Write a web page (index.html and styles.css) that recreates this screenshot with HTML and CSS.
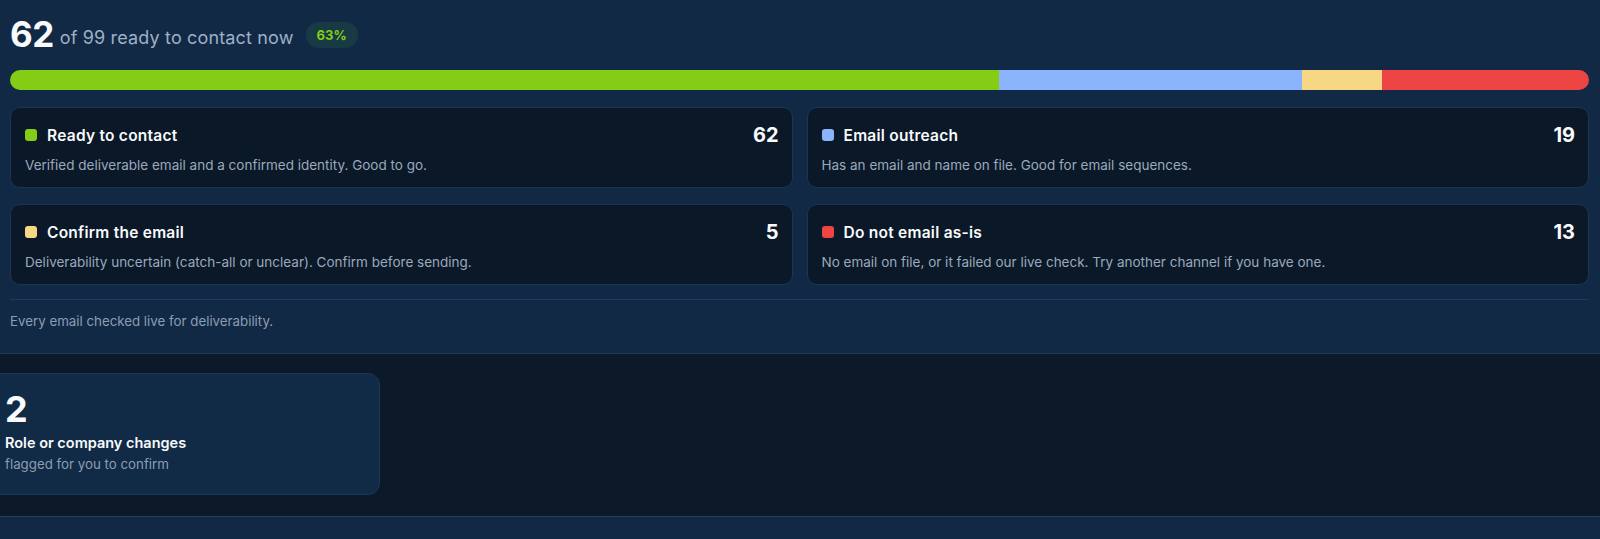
FILE: index.html
```html
<!DOCTYPE html>
<html lang="en">
<head>
    <meta charset="UTF-8">
    <meta name="viewport" content="width=device-width, initial-scale=1.0">
    <title>Contact readiness</title>
    <link rel="stylesheet" href="styles.css">
</head>
<body>
    <section class="summary">
        <div class="headline">
            <span class="headline-count">62</span>
            <span class="headline-text">of 99 ready to contact now</span>
            <span class="badge">63%</span>
        </div>

        <div class="bar">
            <div class="bar-seg seg-ready" style="width: 62.63%"></div>
            <div class="bar-seg seg-email" style="width: 19.19%"></div>
            <div class="bar-seg seg-confirm" style="width: 5.05%"></div>
            <div class="bar-seg seg-skip" style="width: 13.13%"></div>
        </div>

        <div class="bucket-grid">
            <div class="bucket">
                <div class="bucket-head">
                    <span class="dot dot-ready"></span>
                    <span class="bucket-title">Ready to contact</span>
                    <span class="bucket-count">62</span>
                </div>
                <p class="bucket-desc">Verified deliverable email and a confirmed identity. Good to go.</p>
            </div>
            <div class="bucket">
                <div class="bucket-head">
                    <span class="dot dot-email"></span>
                    <span class="bucket-title">Email outreach</span>
                    <span class="bucket-count">19</span>
                </div>
                <p class="bucket-desc">Has an email and name on file. Good for email sequences.</p>
            </div>
            <div class="bucket">
                <div class="bucket-head">
                    <span class="dot dot-confirm"></span>
                    <span class="bucket-title">Confirm the email</span>
                    <span class="bucket-count">5</span>
                </div>
                <p class="bucket-desc">Deliverability uncertain (catch-all or unclear). Confirm before sending.</p>
            </div>
            <div class="bucket">
                <div class="bucket-head">
                    <span class="dot dot-skip"></span>
                    <span class="bucket-title">Do not email as-is</span>
                    <span class="bucket-count">13</span>
                </div>
                <p class="bucket-desc">No email on file, or it failed our live check. Try another channel if you have one.</p>
            </div>
        </div>

        <p class="note">Every email checked live for deliverability.</p>
    </section>

    <section class="changes">
        <div class="change-card">
            <div class="change-count">2</div>
            <div class="change-title">Role or company changes</div>
            <div class="change-sub">flagged for you to confirm</div>
        </div>
    </section>

    <footer class="footer-strip"></footer>
</body>
</html>
```

FILE: styles.css
```css
/* Global */
body {
    margin: 0;
    font-family: Inter, 'Open Sans', sans-serif;
    background-color: #0b1929;
    color: #f8fafc;
}

/* Top summary block */
.summary {
    background-color: #112945;
    border-bottom: 1px solid #1e3a5c;
    padding: 14px 11px 0 10px;
    height: 339px;
    box-sizing: content-box;
}

.headline {
    display: flex;
    align-items: center;
    height: 40px;
}

.headline-count {
    font-size: 35px;
    font-weight: 700;
    letter-spacing: -0.5px;
    margin-right: 6px;
}

.headline-text {
    font-size: 18px;
    letter-spacing: 0.15px;
    color: #9fb0c6;
    margin-top: 6px;
}

.badge {
    margin-left: 12px;
    margin-top: 2px;
    background-color: #173a44;
    color: #84cc16;
    font-size: 13px;
    font-weight: 700;
    padding: 5px 11px;
    border-radius: 14px;
}

/* Stacked progress bar */
.bar {
    display: flex;
    height: 20px;
    margin-top: 16px;
    border-radius: 10px;
    overflow: hidden;
}

.seg-ready { background-color: #84cc16; }
.seg-email { background-color: #8ab4fb; }
.seg-confirm { background-color: #f6d783; }
.seg-skip { background-color: #ef4444; }

/* Bucket cards */
.bucket-grid {
    display: grid;
    grid-template-columns: 1fr 1fr;
    column-gap: 14px;
    row-gap: 16px;
    margin-top: 17px;
}

.bucket {
    background-color: #0b1828;
    border: 1px solid #1c3555;
    border-radius: 10px;
    padding: 15px 13px 12px 14px;
}

.bucket-head {
    display: flex;
    align-items: center;
    height: 24px;
}

.dot {
    width: 12px;
    height: 12px;
    border-radius: 3px;
    margin-right: 10px;
}

.dot-ready { background-color: #84cc16; }
.dot-email { background-color: #8ab4fb; }
.dot-confirm { background-color: #f6d783; }
.dot-skip { background-color: #ef4444; }

.bucket-title {
    font-size: 15.5px;
    letter-spacing: 0.25px;
    font-weight: 600;
    flex: 1;
}

.bucket-count {
    font-size: 20px;
    font-weight: 700;
}

.bucket-desc {
    margin: 8px 0 0;
    font-size: 13.5px;
    line-height: 20px;
    color: #9aa9bd;
}

/* Footnote */
.note {
    margin: 14px 0 0;
    border-top: 1px solid #1f3a5a;
    padding-top: 13px;
    font-size: 13.3px;
    color: #8d9db3;
}

/* Changes block */
.changes {
    padding: 19px 0 21px;
    border-bottom: 1px solid #22406a;
}

.change-card {
    width: 394px;
    margin-left: -14px;
    box-sizing: border-box;
    background-color: #112a45;
    border: 1px solid #1c3757;
    border-radius: 12px;
    padding: 14px 18px 22px;
}

.change-count {
    font-size: 36px;
    font-weight: 700;
    line-height: 42px;
}

.change-title {
    font-size: 14.5px;
    font-weight: 600;
    margin-top: 4px;
}

.change-sub {
    font-size: 13.3px;
    color: #8d9db3;
    margin-top: 5px;
}

.footer-strip {
    background-color: #112945;
    height: 40px;
}
```
